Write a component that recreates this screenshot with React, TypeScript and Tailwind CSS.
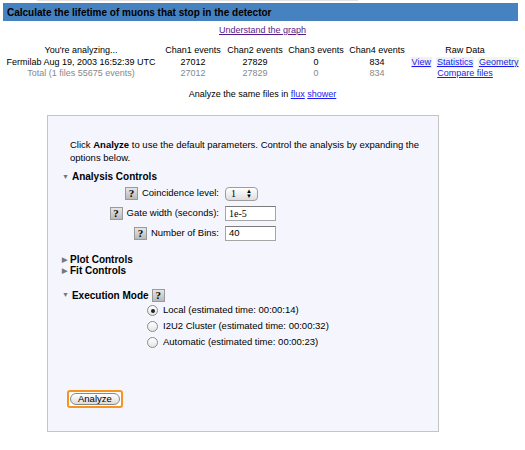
import React from "react";

const font = "font-['Liberation_Sans',Arial,sans-serif]";

const rows = [
  { label: "Fermilab Aug 19, 2003 16:52:39 UTC", c: ["27012", "27829", "0", "834"], total: false },
  { label: "Total (1 files 55675 events)", c: ["27012", "27829", "0", "834"], total: true },
];

const Help = () => (
  <span className="inline-flex items-center justify-center w-[13px] h-[13px] bg-gradient-to-b from-[#e6e6e6] to-[#b9b9b9] border border-[#9a9a9a] text-[11px] font-bold leading-none font-['Liberation_Serif',serif] text-black shrink-0">
    ?
  </span>
);

const Radio = ({ on }: { on?: boolean }) => (
  <span className="inline-flex items-center justify-center w-[11px] h-[11px] rounded-full border border-[#8a8a8a] bg-gradient-to-b from-white to-[#e4e4e4] shrink-0">
    {on && <span className="w-[4px] h-[4px] rounded-full bg-[#222]" />}
  </span>
);

const App = () => {
  return (
    <div className={`w-[525px] h-[450px] bg-white text-black text-[9px] ${font} relative overflow-hidden`}>
      <div className="h-[1px] ml-[37px] w-[321px] bg-[#e2e2e2]" />
      {/* Title bar */}
      <div className="mt-[2px] ml-[3px] w-[515px] h-[18px] bg-[#4682bf] px-[4px] flex items-center text-[10px] font-bold">
        Calculate the lifetime of muons that stop in the detector
      </div>
      <div className="text-center mt-[3px] leading-[13px]">
        <a className="text-[#551a8b] underline">Understand the graph</a>
      </div>

      {/* Summary table */}
      <div className="mt-[8px] grid grid-cols-[162px_62px_62px_60px_62px_114px] leading-[11.5px] text-center">
        <div>You're analyzing...</div>
        <div className="whitespace-nowrap">Chan1 events</div>
        <div className="whitespace-nowrap">Chan2 events</div>
        <div className="whitespace-nowrap">Chan3 events</div>
        <div className="whitespace-nowrap">Chan4 events</div>
        <div>Raw Data</div>
        {rows.map((r) => (
          <React.Fragment key={r.label}>
            <div className={`whitespace-nowrap ${r.total ? "text-[#888]" : ""}`}>{r.label}</div>
            {r.c.map((v, j) => (
              <div key={j} className={r.total ? "text-[#888]" : ""}>
                {v}
              </div>
            ))}
            <div className="whitespace-nowrap text-[#1a1aee]">
              {r.total ? (
                <a className="underline">Compare files</a>
              ) : (
                <span className="inline-flex gap-[4px]">
                  <a className="underline bg-[#f1f1f1] px-[1px]">View</a>
                  <a className="underline bg-[#eef3fb] px-[1px]">Statistics</a>
                  <a className="underline bg-[#f0f8e4] px-[1px]">Geometry</a>
                </span>
              )}
            </div>
          </React.Fragment>
        ))}
      </div>

      <div className="text-center mt-[8px] leading-[13px]">
        Analyze the same files in <a className="underline text-[#1a1aee]">flux</a>{" "}
        <a className="underline text-[#1a1aee]">shower</a>
      </div>

      {/* Analysis panel */}
      <div className="mt-[14px] ml-[47px] w-[392px] h-[317px] bg-[#f5f6fd] border border-[#c4c4c4] pl-[22px] pt-[22px] text-[9.5px]">
        <p className="leading-[13px] whitespace-nowrap">
          Click <b>Analyze</b> to use the default parameters. Control the analysis by expanding the
          <br />
          options below.
        </p>

        <div className="mt-[6px] flex items-center leading-[13px] font-bold -ml-[8px] text-[10px]">
          <span className="text-[7px] text-[#777] mr-[3px]">▼</span>
          Analysis Controls
        </div>

        <div className="mt-[3px] flex flex-col gap-[4px]">
          <div className="flex items-center h-[16px]">
            <div className="w-[149px] flex justify-end items-center gap-[4px]">
              <Help />
              <span>Coincidence level:</span>
            </div>
            <div className="ml-[6px] w-[33px] h-[14px] rounded-[4px] border border-[#9d9d9d] bg-gradient-to-b from-white to-[#dedede] flex items-center justify-between px-[5px] font-['Liberation_Serif',serif] text-[10px]">
              <span>1</span>
              <span className="text-[6px] leading-[5px] flex flex-col items-center">
                <span>▲</span>
                <span>▼</span>
              </span>
            </div>
          </div>
          <div className="flex items-center h-[16px]">
            <div className="w-[149px] flex justify-end items-center gap-[4px]">
              <Help />
              <span className="whitespace-nowrap">Gate width (seconds):</span>
            </div>
            <div className="ml-[6px] w-[51px] h-[15px] bg-white border border-[#a5a5a5] border-t-[#7b7b7b] px-[3px] flex items-center font-['Liberation_Serif',serif] text-[10px]">
              1e-5
            </div>
          </div>
          <div className="flex items-center h-[16px]">
            <div className="w-[149px] flex justify-end items-center gap-[4px]">
              <Help />
              <span>Number of Bins:</span>
            </div>
            <div className="ml-[6px] w-[51px] h-[15px] bg-white border border-[#a5a5a5] border-t-[#7b7b7b] px-[3px] flex items-center">
              40
            </div>
          </div>
        </div>

        <div className="mt-[12px] leading-[11px] font-bold -ml-[8px] text-[10px]">
          <div className="flex items-center">
            <span className="text-[7px] text-[#777] mr-[3px]">▶</span>Plot Controls
          </div>
          <div className="flex items-center">
            <span className="text-[7px] text-[#777] mr-[3px]">▶</span>Fit Controls
          </div>
        </div>

        <div className="mt-[12px] flex items-center h-[16px] font-bold -ml-[8px] gap-[3px] text-[10px]">
          <span className="text-[7px] text-[#777]">▼</span>
          <span>Execution Mode</span>
          <Help />
        </div>

        <div className="ml-[77px] -mt-[1px]">
          {[
            ["Local (estimated time: 00:00:14)", true],
            ["I2U2 Cluster (estimated time: 00:00:32)", false],
            ["Automatic (estimated time: 00:00:23)", false],
          ].map(([t, on], i) => (
            <div key={i} className="flex items-center h-[16px] gap-[5px]">
              <Radio on={on as boolean} />
              <span>{t as string}</span>
            </div>
          ))}
        </div>

        <div className="mt-[39px] -ml-[3px] flex w-fit p-[1px] border-[2px] border-[#f7941d] rounded-[3px] bg-white">
          <button className="h-[12px] px-[7px] rounded-full border border-[#888] bg-gradient-to-b from-white to-[#dcdcdc] text-[9.5px] leading-none">
            Analyze
          </button>
        </div>
      </div>
    </div>
  );
};

export default App;
